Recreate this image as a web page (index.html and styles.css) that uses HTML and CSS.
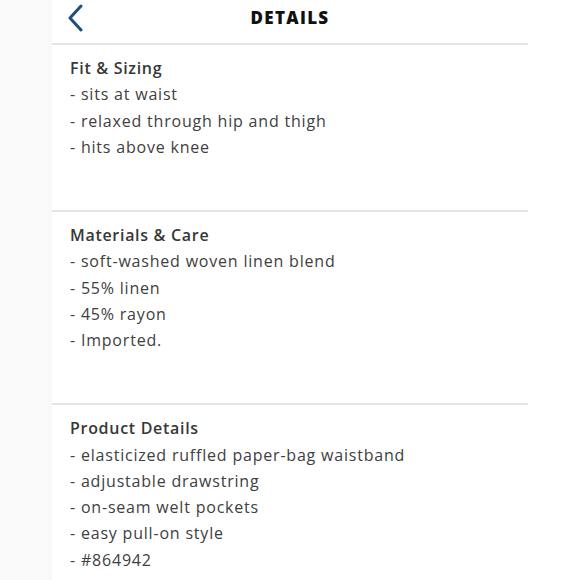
FILE: index.html
```html
<!DOCTYPE html>
<html>
<head>
<meta charset="utf-8">
<link rel="stylesheet" href="styles.css">
</head>
<body>
<div class="page">
  <div class="gutter"></div>
  <div class="main">
    <header class="header">
      <span class="back">
        <svg width="18" height="28" viewBox="0 0 18 28"><path d="M15 2 L4 14 L15 26" fill="none" stroke="#1c4f7c" stroke-width="3" stroke-linecap="round" stroke-linejoin="round"/></svg>
      </span>
      <h1 class="title">DETAILS</h1>
    </header>
    <section class="section">
      <h2 class="sec-title">Fit &amp; Sizing</h2>
      <p class="line">- sits at waist</p>
      <p class="line">- relaxed through hip and thigh</p>
      <p class="line">- hits above knee</p>
    </section>
    <section class="section">
      <h2 class="sec-title">Materials &amp; Care</h2>
      <p class="line">- soft-washed woven linen blend</p>
      <p class="line">- 55% linen</p>
      <p class="line">- 45% rayon</p>
      <p class="line">- Imported.</p>
    </section>
    <section class="section last">
      <h2 class="sec-title">Product Details</h2>
      <p class="line">- elasticized ruffled paper-bag waistband</p>
      <p class="line">- adjustable drawstring</p>
      <p class="line">- on-seam welt pockets</p>
      <p class="line">- easy pull-on style</p>
      <p class="line">- #864942</p>
    </section>
  </div>
</div>
</body>
</html>
```
FILE: styles.css
```css
html, body {
  margin: 0;
  padding: 0;
  background: #ffffff;
}
body {
  font-family: "Open Sans", "Noto Sans", sans-serif;
  color: #3a3a3a;
  overflow: hidden;
}
.page {
  display: flex;
  height: 580px;
  overflow: hidden;
}
.gutter {
  width: 52px;
  flex: none;
  background: #f9f9f9;
}
.main {
  width: 476px;
  flex: none;
}
.header {
  height: 43px;
  position: relative;
  display: flex;
  align-items: flex-start;
  justify-content: center;
  border-bottom: 2px solid #e4e4e4;
}
.back {
  position: absolute;
  left: 14px;
  top: 4px;
  display: block;
  line-height: 0;
}
.title {
  margin: 6px 0 0 0;
  font-size: 17px;
  font-weight: 800;
  letter-spacing: 1.3px;
  color: #111;
  line-height: 24px;
}
.section {
  padding: 10px 18px 50px 18px;
  border-bottom: 2px solid #e4e4e4;
}
.section.last {
  border-bottom: none;
}
.sec-title {
  margin: 0;
  font-size: 16px;
  font-weight: 600;
  letter-spacing: 0.7px;
  line-height: 26.25px;
  color: #383838;
}
.line {
  margin: 0;
  font-size: 16px;
  font-weight: 400;
  letter-spacing: 0.8px;
  line-height: 26.25px;
  color: #404040;
}
```
